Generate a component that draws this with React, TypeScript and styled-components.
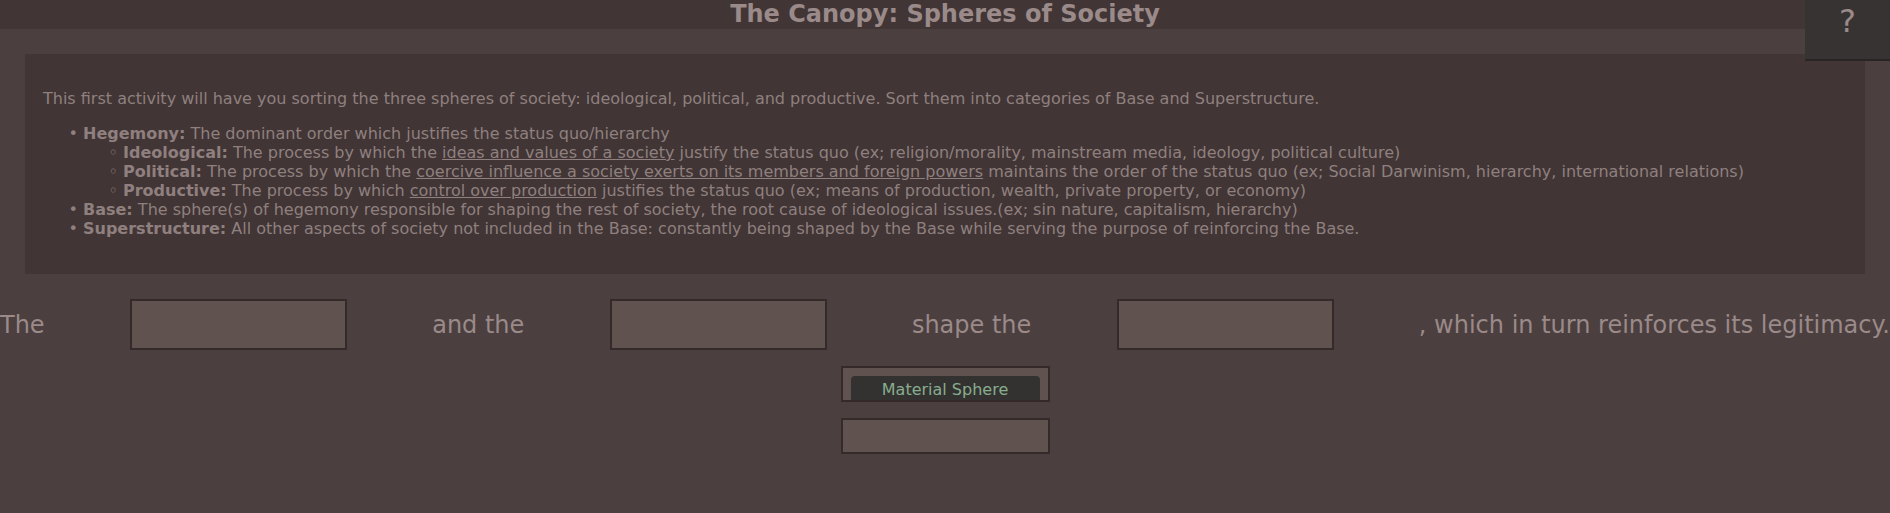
import React from 'react';
import styled, {createGlobalStyle} from 'styled-components';

const GlobalStyle = createGlobalStyle`
  body {
    margin: 0;
    background: #4c3f3f;
    color: #9a8a89;
    font-family: "DejaVu Sans", Verdana, sans-serif;
  }
`;

const Header = styled.header`
  height: 29px;
  background: #413535;
  > h1 {
    margin: 0;
    font-size: 24px;
    line-height: 28px;
    font-weight: bold;
    text-align: center;
    color: #9a8a89;
  }
`;

const HelpButton = styled.button`
  position: absolute;
  top: 0;
  right: 0;
  width: 85px;
  height: 61px;
  border: none;
  border-bottom: 2px solid #2a2525;
  background: #373332;
  color: #9a8a89;
  font-family: "DejaVu Sans", sans-serif;
  font-size: 32px;
  line-height: 40px;
  padding: 1px 0 0;
  display: flex;
  justify-content: center;
  align-items: flex-start;
`;

const Panel = styled.section`
  margin: 25px 25px 0;
  padding: 19px 18px 20px;
  background: #413535;
  color: #8f807f;
  font-size: 16px;
  line-height: 19px;
  > p {
    margin: 16px 0;
  }
  ul {
    margin: 16px 0;
    padding-left: 40px;
    list-style-type: "• ";
  }
  ul ul {
    margin: 0;
    list-style-type: "◦ ";
  }
  u {
    text-decoration: underline;
  }
`;

const SentenceRow = styled.div`
  display: flex;
  justify-content: space-between;
  align-items: center;
  margin-top: 25px;
  font-size: 24px;
  line-height: 28px;
`;

const DropSlot = styled.div`
  box-sizing: border-box;
  width: 217px;
  height: 51px;
  border: 2px solid #352929;
  background: #5f524f;
`;

const Bank = styled.div`
  display: flex;
  flex-direction: column;
  align-items: center;
  gap: 16px;
  margin-top: 16px;
`;

const BankSlot = styled.div`
  box-sizing: border-box;
  width: 209px;
  height: 36px;
  padding: 8px 8px 0;
  border: 2px solid #352929;
  background: #5f524f;
  overflow: hidden;
`;

const Chip = styled.div`
  padding: 4px 0;
  border-radius: 4px;
  background: #343230;
  color: #87ad8f;
  font-size: 16px;
  line-height: 19px;
  text-align: center;
`;

const terms = ['Material Sphere'];

export default function App() {
  return (
    <>
      <GlobalStyle/>
      <Header>
        <h1>The Canopy: Spheres of Society</h1>
      </Header>
      <HelpButton>?</HelpButton>
      <Panel>
        <p>This first activity will have you sorting the three spheres of society: ideological, political, and productive. Sort them into categories of Base and Superstructure.</p>
        <ul>
          <li>
            <b>Hegemony:</b> The dominant order which justifies the status quo/hierarchy
            <ul>
              <li><b>Ideological:</b> The process by which the <u>ideas and values of a society</u> justify the status quo (ex; religion/morality, mainstream media, ideology, political culture)</li>
              <li><b>Political:</b> The process by which the <u>coercive influence a society exerts on its members and foreign powers</u> maintains the order of the status quo (ex; Social Darwinism, hierarchy, international relations)</li>
              <li><b>Productive:</b> The process by which <u>control over production</u> justifies the status quo (ex; means of production, wealth, private property, or economy)</li>
            </ul>
          </li>
          <li><b>Base:</b> The sphere(s) of hegemony responsible for shaping the rest of society, the root cause of ideological issues.(ex; sin nature, capitalism, hierarchy)</li>
          <li><b>Superstructure:</b> All other aspects of society not included in the Base: constantly being shaped by the Base while serving the purpose of reinforcing the Base.</li>
        </ul>
      </Panel>
      <SentenceRow>
        <span>The</span>
        <DropSlot/>
        <span>and the</span>
        <DropSlot/>
        <span>shape the</span>
        <DropSlot/>
        <span>, which in turn reinforces its legitimacy.</span>
      </SentenceRow>
      <Bank>
        {terms.map(term =>
          <BankSlot key={term}>
            <Chip>{term}</Chip>
          </BankSlot>
        )}
        <BankSlot/>
      </Bank>
    </>
  );
}
